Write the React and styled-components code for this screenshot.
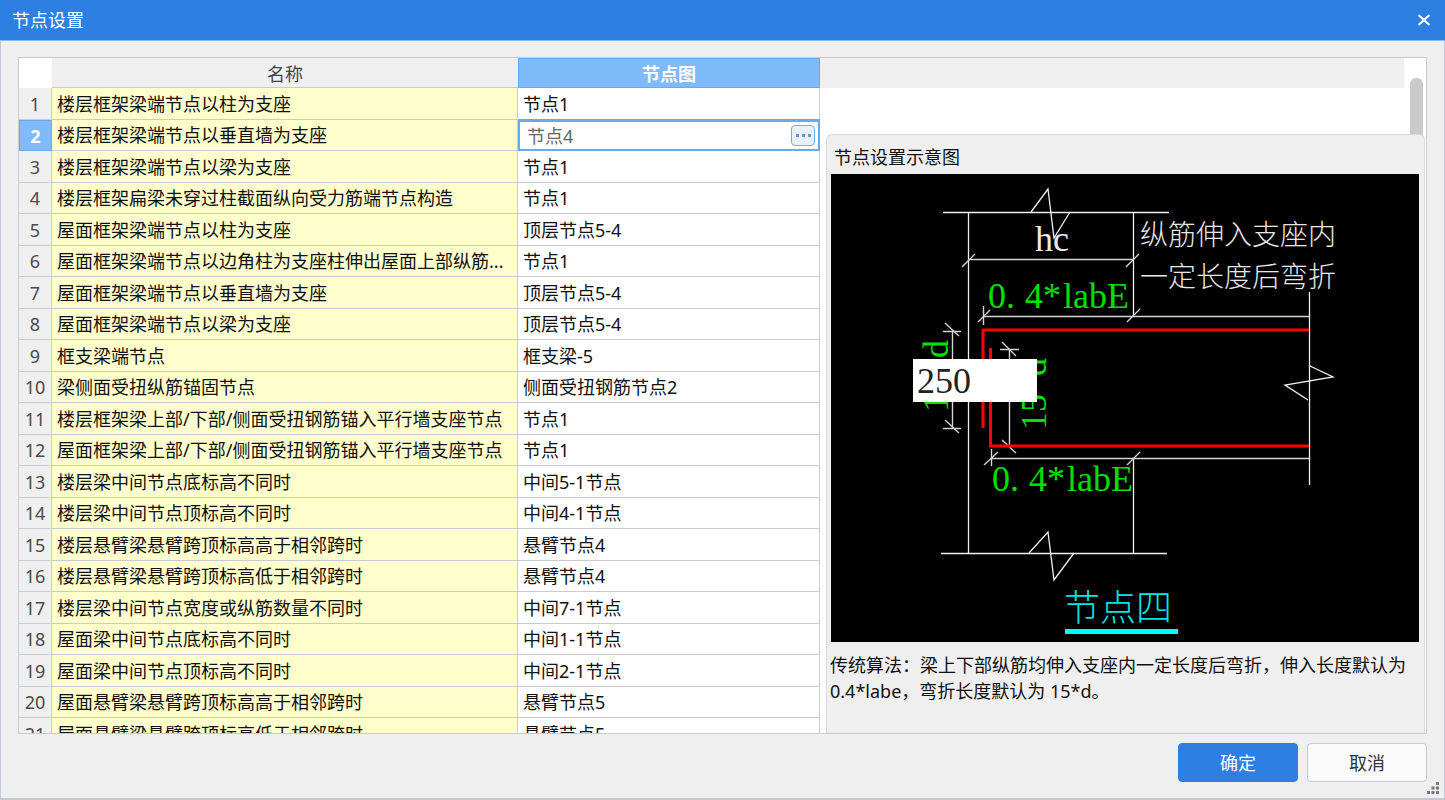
import React from "react";
import styled, { createGlobalStyle, css } from "styled-components";

const GlobalStyle = createGlobalStyle`
  * { box-sizing: border-box; }
  html, body, #root { height: 100%; }
  body {
    margin: 0;
    overflow: hidden;
    background: #efefef;
    color: #111;
    font: 18px/26px "Noto Sans", "Noto Sans CJK SC", sans-serif;
  }
  button, input { font: inherit; }
`;

const line = "#c8cbd0";
const selected = "#7fbbfb";
const selectedEdge = "#68aaee";

const Dialog = styled.div`
  position: relative;
  display: flex;
  flex-direction: column;
  height: 100%;
`;

const TitleBar = styled.header`
  display: flex;
  align-items: center;
  justify-content: space-between;
  height: 41px;
  padding: 0 11px 0 12px;
  background: #2d7fe2;
  border-bottom: 1px solid #8ab6ec;
  color: #fff;
`;

const Title = styled.h1`
  margin: 0;
  font-size: 18px;
  font-weight: 400;
`;

const CloseButton = styled.button`
  display: flex;
  padding: 2px;
  border: 0;
  background: none;
  color: inherit;
`;

const Body = styled.main`
  flex: 1;
  min-height: 0;
  display: flex;
  flex-direction: column;
  padding: 16px 17px;
  border: 1px solid #c0c9da;
  border-top: 0;
  border-bottom-width: 2px;
`;

const Frame = styled.section`
  position: relative;
  flex: 1;
  min-height: 0;
  display: flex;
  overflow: hidden;
  border: 1px solid ${line};
  background: #fff;
`;

const TableArea = styled.div`
  flex: 1;
  min-width: 0;
`;

const Table = styled.table`
  width: 100%;
  table-layout: fixed;
  border-collapse: separate;
  border-spacing: 0;
`;

const NumberCol = styled.col`
  width: 33px;
`;

const NodeCol = styled.col`
  width: 302px;
`;

const HeadCell = styled.th`
  height: 30px;
  padding: 2px 0 0;
  border-bottom: 1px solid ${line};
  background: #efefef;
  color: #444;
  font-weight: 400;
  line-height: 24px;
  ${(p) =>
    p.$selected &&
    css`
      border: 1px solid ${selectedEdge};
      background: ${selected};
      color: #fff;
      font-weight: 700;
    `}
`;

const CornerCell = styled.td`
  height: 30px;
  padding: 0;
  background: #fff;
`;

const Row = styled.tr`
  height: 31px;
  &:nth-child(odd) { height: 32px; }
`;

const RowHead = styled.th`
  padding: 0;
  border-right: 1px solid ${line};
  border-bottom: 1px solid ${line};
  background: #efefef;
  color: #4a4a4a;
  font-weight: 400;
  ${(p) =>
    p.$selected &&
    css`
      border: 1px solid ${selectedEdge};
      background: ${selected};
      color: #fff;
      font-weight: 700;
    `}
`;

const Cell = styled.td`
  padding: 0 5px;
  overflow: hidden;
  border-right: 1px solid ${line};
  border-bottom: 1px solid ${line};
  background: ${(p) => (p.$name ? "#ffffcd" : "#fff")};
  line-height: 24px;
  white-space: nowrap;
`;

const EditCell = styled.td`
  padding: 0 5px 0 9px;
  box-shadow: inset 0 0 0 2px ${selectedEdge}, 0 -1px 0 ${selectedEdge};
`;

const Editor = styled.div`
  display: flex;
  align-items: center;
`;

const EditorInput = styled.input`
  flex: 1;
  min-width: 0;
  height: 24px;
  padding: 0;
  border: 0;
  outline: 0;
  background: none;
  color: #666;
`;

const MoreButton = styled.button`
  display: flex;
  align-items: center;
  justify-content: center;
  width: 24px;
  height: 21px;
  padding: 0;
  border: 1px solid #6faeea;
  border-radius: 4px;
  background: #e9f0f8;
  color: #5a9ad2;
`;

const HeaderFiller = styled.div`
  width: 584px;
  height: 30px;
  background: #efefef;
`;

const ScrollTrack = styled.div`
  width: 22px;
  padding: 20px 3px 0 6px;
`;

const ScrollThumb = styled.div`
  height: 300px;
  border-radius: 6px;
  background: #cacaca;
`;

const PreviewPanel = styled.aside`
  position: absolute;
  top: 76px;
  right: 1px;
  bottom: 0;
  width: 599px;
  padding: 9px 4px;
  border: 1px solid #dadada;
  border-bottom: 0;
  border-radius: 6px 6px 0 0;
  background: #efefef;
`;

const PanelTitle = styled.h2`
  margin: 0 0 4px 3px;
  font-size: 18px;
  font-weight: 400;
`;

const Figure = styled.figure`
  position: relative;
  width: 588px;
  height: 468px;
  margin: 0;
  background: #000;
`;

const Drawing = styled.svg`
  display: block;
`;

const CadText = styled.text`
  fill: ${(p) => p.$color || "#e8e8e8"};
  font-family: "Liberation Serif", "Noto Sans CJK SC", serif;
  font-size: ${(p) => p.$size || 36}px;
  font-weight: 300;
`;

const LengthInput = styled.input`
  position: absolute;
  left: 82px;
  top: 185px;
  width: 124px;
  height: 43px;
  padding: 0 4px;
  border: 0;
  background: #fff;
  color: #222;
  font: 36px "Liberation Serif", serif;
`;

const Description = styled.p`
  margin: 10px -4px 0 -1px;
`;

const Footer = styled.footer`
  display: flex;
  justify-content: flex-end;
  gap: 9px;
  padding-top: 9px;
`;

const ActionButton = styled.button`
  width: 120px;
  height: 39px;
  padding: 0;
  border: 1px solid ${(p) => (p.$primary ? "#2d7fe2" : "#c3cbdc")};
  border-radius: 4px;
  background: ${(p) => (p.$primary ? "#2d7fe2" : "#fafafa")};
  color: ${(p) => (p.$primary ? "#fff" : "#333")};
`;

const ResizeGrip = styled.svg`
  position: absolute;
  right: 6px;
  bottom: 6px;
`;

const rows = [
  ["楼层框架梁端节点以柱为支座", "节点1"],
  ["楼层框架梁端节点以垂直墙为支座", "节点4"],
  ["楼层框架梁端节点以梁为支座", "节点1"],
  ["楼层框架扁梁未穿过柱截面纵向受力筋端节点构造", "节点1"],
  ["屋面框架梁端节点以柱为支座", "顶层节点5-4"],
  ["屋面框架梁端节点以边角柱为支座柱伸出屋面上部纵筋...", "节点1"],
  ["屋面框架梁端节点以垂直墙为支座", "顶层节点5-4"],
  ["屋面框架梁端节点以梁为支座", "顶层节点5-4"],
  ["框支梁端节点", "框支梁-5"],
  ["梁侧面受扭纵筋锚固节点", "侧面受扭钢筋节点2"],
  ["楼层框架梁上部/下部/侧面受扭钢筋锚入平行墙支座节点", "节点1"],
  ["屋面框架梁上部/下部/侧面受扭钢筋锚入平行墙支座节点", "节点1"],
  ["楼层梁中间节点底标高不同时", "中间5-1节点"],
  ["楼层梁中间节点顶标高不同时", "中间4-1节点"],
  ["楼层悬臂梁悬臂跨顶标高高于相邻跨时", "悬臂节点4"],
  ["楼层悬臂梁悬臂跨顶标高低于相邻跨时", "悬臂节点4"],
  ["楼层梁中间节点宽度或纵筋数量不同时", "中间7-1节点"],
  ["屋面梁中间节点底标高不同时", "中间1-1节点"],
  ["屋面梁中间节点顶标高不同时", "中间2-1节点"],
  ["屋面悬臂梁悬臂跨顶标高高于相邻跨时", "悬臂节点5"],
  ["屋面悬臂梁悬臂跨顶标高低于相邻跨时", "悬臂节点5"],
];
const activeRow = 1;

function NodeTable() {
  return (
    <Table>
      <colgroup>
        <NumberCol />
        <col />
        <NodeCol />
      </colgroup>
      <thead>
        <tr>
          <CornerCell />
          <HeadCell scope="col">名称</HeadCell>
          <HeadCell scope="col" $selected>节点图</HeadCell>
        </tr>
      </thead>
      <tbody>
        {rows.map(([name, node], i) => (
          <Row key={name}>
            <RowHead scope="row" $selected={i === activeRow}>{i + 1}</RowHead>
            <Cell $name>{name}</Cell>
            {i === activeRow ? (
              <EditCell>
                <Editor>
                  <EditorInput aria-label={name} defaultValue={node} />
                  <MoreButton type="button" aria-label="选择节点图">
                    <svg width="15" height="3" fill="currentColor" aria-hidden="true">
                      <rect x="0" y="0" width="3" height="3" />
                      <rect x="6" y="0" width="3" height="3" />
                      <rect x="12" y="0" width="3" height="3" />
                    </svg>
                  </MoreButton>
                </Editor>
              </EditCell>
            ) : (
              <Cell>{node}</Cell>
            )}
          </Row>
        ))}
      </tbody>
    </Table>
  );
}

const green = "#00e000";

function NodeDrawing() {
  return (
    <Drawing width="588" height="468" viewBox="0 0 588 468" fill="none" role="img" aria-label="节点四">
      {/* column outline and beam end */}
      <g stroke="#f0f0f0" strokeWidth="1.3">
        <path d="M112 38.5H338M137.5 38V379M302.5 38V142M302.5 284V379M110 379.5H336" />
        <path d="M478.5 118V311" />
      </g>
      {/* dimension lines */}
      <g stroke="#d4d4d4" strokeWidth="1.4">
        <path d="M137 85.5H302M152 142.5H478M160 284.5H478M121.5 157V254M178.5 175V272" />
        <path d="M152.5 132V151M160.5 275V292M112 157.5H130M112 254.5H130M169 175.5H188" />
        <path d="M131 93L144 80M295 93L308 80M147 148L159 136M296 148L309 135M153 291L167 278M296 291L309 278" />
        <path d="M114 149L128 162M114 246L128 259M171 168L185 182M171 266L185 279" />
      </g>
      {/* break symbols */}
      <g stroke="#f0f0f0" strokeWidth="1.3">
        <path d="M200 38L217 15L223 64L239 38" />
        <path d="M198 379L217 358L223 406L243 379" />
        <path d="M479 192L502 203L454 211L477 226" />
      </g>
      {/* reinforcement bars */}
      <g stroke="#f00" strokeWidth="3" strokeLinejoin="round">
        <path d="M478 156H152V254" />
        <path d="M159.5 174V272H478" />
      </g>
      <CadText x="204" y="77">hc</CadText>
      <CadText x="309" y="71" $size={28}>纵筋伸入支座内</CadText>
      <CadText x="309" y="113" $size={28}>一定长度后弯折</CadText>
      <CadText x="157" y="134" $color={green}>0.<tspan x="194">4*</tspan><tspan x="232">labE</tspan></CadText>
      <CadText x="161" y="317" $color={green}>0.<tspan x="198">4*</tspan><tspan x="236">labE</tspan></CadText>
      <CadText transform="translate(117 238) rotate(-90)" $color={green}>15*d</CadText>
      <CadText transform="translate(215 256) rotate(-90)" $color={green}>15*d</CadText>
      <CadText x="233" y="447" $color="#00e5e5">节点四</CadText>
      <rect x="234" y="455" width="113" height="5" fill="#0ff" />
    </Drawing>
  );
}

export default function App() {
  return (
    <>
      <GlobalStyle />
      <Dialog role="dialog" aria-labelledby="dialog-title">
        <TitleBar>
          <Title id="dialog-title">节点设置</Title>
          <CloseButton type="button" aria-label="关闭">
            <svg width="16" height="16" stroke="currentColor" strokeWidth="2" aria-hidden="true">
              <path d="M2.5 3L13.5 13M13.5 3L2.5 13" />
            </svg>
          </CloseButton>
        </TitleBar>
        <Body>
          <Frame>
            <TableArea>
              <NodeTable />
            </TableArea>
            <HeaderFiller />
            <ScrollTrack>
              <ScrollThumb />
            </ScrollTrack>
            <PreviewPanel>
              <PanelTitle>节点设置示意图</PanelTitle>
              <Figure>
                <NodeDrawing />
                <LengthInput aria-label="弯折长度" defaultValue="250" />
              </Figure>
              <Description>
                传统算法：梁上下部纵筋均伸入支座内一定长度后弯折，伸入长度默认为 0.4*labe，弯折长度默认为 15*d。
              </Description>
            </PreviewPanel>
          </Frame>
          <Footer>
            <ActionButton type="button" $primary>确定</ActionButton>
            <ActionButton type="button">取消</ActionButton>
          </Footer>
        </Body>
        <ResizeGrip width="12" height="12" fill="#77797e" aria-hidden="true">
          <path d="M9 0h3v3h-3zM9 4.5h3v3h-3zM4.5 4.5h3v3h-3zM9 9h3v3h-3zM4.5 9h3v3h-3zM0 9h3v3h-3z" />
        </ResizeGrip>
      </Dialog>
    </>
  );
}
